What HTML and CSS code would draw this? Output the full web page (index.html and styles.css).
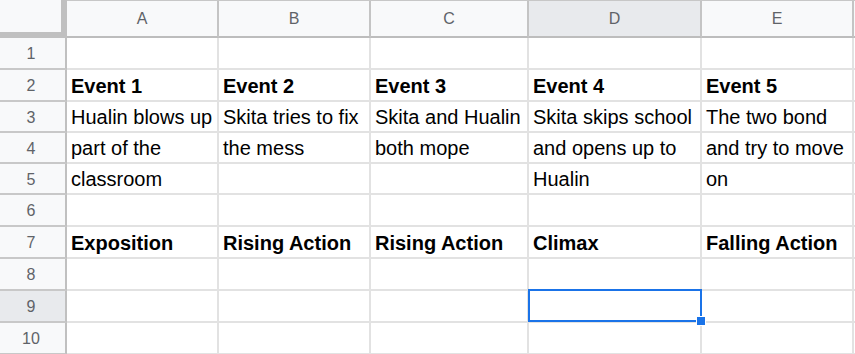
FILE: index.html
```html
<!DOCTYPE html>
<html lang="en">
<head>
    <meta charset="UTF-8">
    <meta name="viewport" content="width=device-width, initial-scale=1.0">
    <title>Story Plot Sheet</title>
    <link rel="stylesheet" href="styles.css">
</head>
<body>
    <div class="sheet">
        <!-- column headers -->
        <div class="corner"></div>
        <div class="col-head">A</div>
        <div class="col-head">B</div>
        <div class="col-head">C</div>
        <div class="col-head active">D</div>
        <div class="col-head">E</div>
        <div class="col-head"></div>

        <!-- row 1 -->
        <div class="row-head">1</div>
        <div class="cell"></div>
        <div class="cell"></div>
        <div class="cell"></div>
        <div class="cell"></div>
        <div class="cell"></div>
        <div class="cell"></div>

        <!-- row 2 -->
        <div class="row-head">2</div>
        <div class="cell bold">Event 1</div>
        <div class="cell bold">Event 2</div>
        <div class="cell bold">Event 3</div>
        <div class="cell bold">Event 4</div>
        <div class="cell bold">Event 5</div>
        <div class="cell"></div>

        <!-- row 3 -->
        <div class="row-head">3</div>
        <div class="cell">Hualin blows up</div>
        <div class="cell">Skita tries to fix</div>
        <div class="cell">Skita and Hualin</div>
        <div class="cell">Skita skips school</div>
        <div class="cell">The two bond</div>
        <div class="cell"></div>

        <!-- row 4 -->
        <div class="row-head">4</div>
        <div class="cell">part of the</div>
        <div class="cell">the mess</div>
        <div class="cell">both mope</div>
        <div class="cell">and opens up to</div>
        <div class="cell">and try to move</div>
        <div class="cell"></div>

        <!-- row 5 -->
        <div class="row-head">5</div>
        <div class="cell">classroom</div>
        <div class="cell"></div>
        <div class="cell"></div>
        <div class="cell">Hualin</div>
        <div class="cell">on</div>
        <div class="cell"></div>

        <!-- row 6 -->
        <div class="row-head">6</div>
        <div class="cell"></div>
        <div class="cell"></div>
        <div class="cell"></div>
        <div class="cell"></div>
        <div class="cell"></div>
        <div class="cell"></div>

        <!-- row 7 -->
        <div class="row-head">7</div>
        <div class="cell bold">Exposition</div>
        <div class="cell bold">Rising Action</div>
        <div class="cell bold">Rising Action</div>
        <div class="cell bold">Climax</div>
        <div class="cell bold">Falling Action</div>
        <div class="cell"></div>

        <!-- row 8 -->
        <div class="row-head">8</div>
        <div class="cell"></div>
        <div class="cell"></div>
        <div class="cell"></div>
        <div class="cell"></div>
        <div class="cell"></div>
        <div class="cell"></div>

        <!-- row 9 -->
        <div class="row-head active">9</div>
        <div class="cell"></div>
        <div class="cell"></div>
        <div class="cell"></div>
        <div class="cell selected"></div>
        <div class="cell"></div>
        <div class="cell"></div>

        <!-- row 10 -->
        <div class="row-head">10</div>
        <div class="cell"></div>
        <div class="cell"></div>
        <div class="cell"></div>
        <div class="cell"></div>
        <div class="cell"></div>
        <div class="cell"></div>
    </div>
</body>
</html>
```

FILE: styles.css
```css
body {
    margin: 0;
    background: #fff;
    font-family: "Liberation Sans", Arial, sans-serif;
    overflow: hidden;
}

.sheet {
    display: grid;
    grid-template-columns: 67px 152px 152px 158px 173px 152px 1fr;
    grid-template-rows: 37px 32px 32px 31px 31px 31px 32px 32px 32px 32px 32px;
    width: 100%;
    border-top: 1px solid #c7c7c7;
}

/* top-left box with the freeze bars */
.corner {
    background-color: #f8f9fa;
    border-right: 6px solid #c0c0c0;
    border-bottom: 6px solid #c0c0c0;
    margin-top: -1px;
}

.col-head,
.row-head {
    background-color: #f8f9fa;
    color: #5f6368;
    font-size: 16px;
    display: flex;
    align-items: center;
    justify-content: center;
    box-sizing: border-box;
}

.col-head {
    border-right: 2px solid #c4c4c4;
    border-bottom: 2px solid #bdbdbd;
    padding-top: 1px;
}

.row-head {
    border-right: 2px solid #c0c0c0;
    border-bottom: 2px solid #c8c8c8;
    padding-top: 2px;
    padding-right: 3px;
}

.col-head.active,
.row-head.active {
    background-color: #e8eaed;
}

.cell {
    border-right: 2px solid #e2e2e2;
    border-bottom: 2px solid #e2e2e2;
    padding: 0 4px 3px;
    font-size: 20px;
    line-height: 22px;
    color: #000;
    white-space: nowrap;
    display: flex;
    align-items: flex-end;
    box-sizing: border-box;
}

.bold {
    font-weight: bold;
}

/* current cell outline with the fill handle */
.selected {
    position: relative;
}

.selected::before {
    content: "";
    position: absolute;
    left: -1px;
    top: -2px;
    right: -2px;
    bottom: -1px;
    border: 2px solid #1a73e8;
}

.selected::after {
    content: "";
    position: absolute;
    right: -6px;
    bottom: -5px;
    width: 8px;
    height: 8px;
    background-color: #1a73e8;
    border: 1px solid #fff;
}
```
